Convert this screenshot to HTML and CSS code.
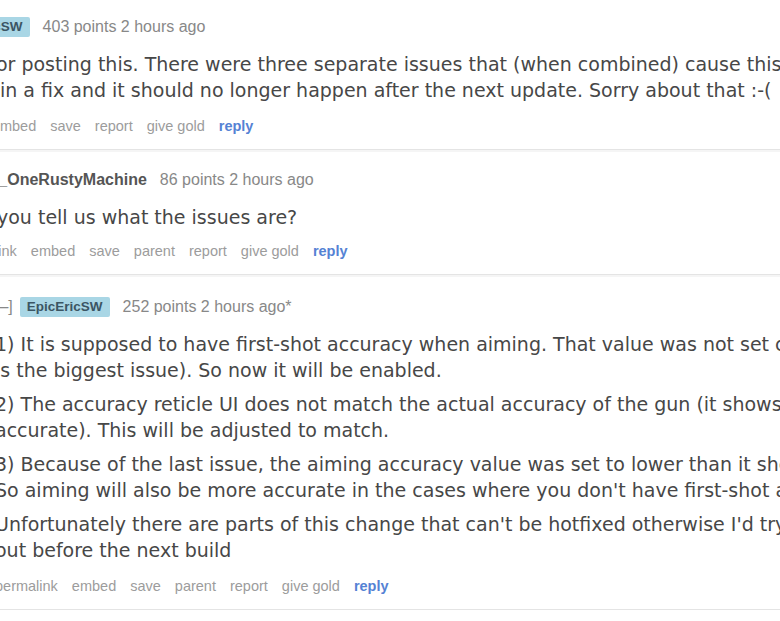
FILE: index.html
```html
<!DOCTYPE html>
<html lang="en">
<head>
    <meta charset="UTF-8">
    <meta name="viewport" content="width=device-width, initial-scale=1.0">
    <title>Comments</title>
    <link rel="stylesheet" href="styles.css">
</head>
<body>
    <div class="thread">
        <div class="comment c1">
            <p class="tagline">
                <a class="expand">[–]</a>
                <a class="author badge">EpicEricSW</a>
                <span class="score">403 points 2 hours ago</span>
            </p>
            <div class="md">
                <p>Thanks for posting this. There were three separate issues that (when combined) cause this bug.<br>So, I put in a fix and it should no longer happen after the next update. Sorry about that :-(</p>
            </div>
            <ul class="buttons">
                <li>permalink</li>
                <li>embed</li>
                <li>save</li>
                <li>report</li>
                <li>give gold</li>
                <li class="reply">reply</li>
            </ul>
        </div>

        <div class="comment c2">
            <p class="tagline">
                <a class="expand">[–]</a>
                <a class="author">Mr_OneRustyMachine</a>
                <span class="score">86 points 2 hours ago</span>
            </p>
            <div class="md">
                <p>Can you tell us what the issues are?</p>
            </div>
            <ul class="buttons">
                <li>permalink</li>
                <li>embed</li>
                <li>save</li>
                <li>parent</li>
                <li>report</li>
                <li>give gold</li>
                <li class="reply">reply</li>
            </ul>
        </div>

        <div class="comment c3">
            <p class="tagline">
                <a class="expand">[–]</a>
                <a class="author badge">EpicEricSW</a>
                <span class="score">252 points 2 hours ago*</span>
            </p>
            <div class="md">
                <p>1) It is supposed to have first-shot accuracy when aiming. That value was not set correctly (this<br>is the biggest issue). So now it will be enabled.</p>
                <p>2) The accuracy reticle UI does not match the actual accuracy of the gun (it shows as less<br>accurate). This will be adjusted to match.</p>
                <p>3) Because of the last issue, the aiming accuracy value was set to lower than it should have been.<br>So aiming will also be more accurate in the cases where you don't have first-shot accuracy.</p>
                <p>Unfortunately there are parts of this change that can't be hotfixed otherwise I'd try to get it<br>out before the next build</p>
            </div>
            <ul class="buttons">
                <li>permalink</li>
                <li>embed</li>
                <li>save</li>
                <li>parent</li>
                <li>report</li>
                <li>give gold</li>
                <li class="reply">reply</li>
            </ul>
        </div>
    </div>
</body>
</html>
```

FILE: styles.css
```css
html, body {
    margin: 0;
    padding: 0;
    background-color: #fff;
    overflow: hidden;
}
.thread {
    margin-top: -3px;
}
.comment {
    padding: 18px 0 13px;
    border-bottom: 1px solid #e4e4e4;
    box-shadow: 0 2px 0 #f5f5f5;
}
.c1 {
    margin-left: -85px;
}
.c2 {
    margin-left: -46px;
}
.c2 .buttons {
    margin-top: 11px;
}
.c3 {
    margin-left: -5px;
    padding-top: 20px;
}
.tagline {
    display: flex;
    align-items: center;
    height: 24px;
    margin: 0;
    font-family: "Liberation Sans", Arial, sans-serif;
    font-size: 16px;
    line-height: 24px;
    color: #888;
    white-space: nowrap;
}
.expand {
    margin-right: 7px;
}
.author {
    margin-right: 13px;
    font-weight: bold;
    color: #555;
}
.badge {
    background-color: #a9d6e5;
    color: #3b5563;
    font-size: 13.5px;
    line-height: 20px;
    padding: 0 7px;
    border-radius: 2px;
}
.md {
    margin-top: 12px;
    font-family: "DejaVu Sans", Verdana, sans-serif;
    font-size: 19px;
    line-height: 26px;
    color: #474747;
    white-space: nowrap;
}
.md p {
    margin: 0;
}
.md p + p {
    margin-top: 8px;
}
.buttons {
    display: flex;
    gap: 14px;
    list-style: none;
    margin: 13px 0 0;
    padding: 0;
    font-family: "Liberation Sans", Arial, sans-serif;
    font-size: 14.5px;
    line-height: 20px;
    color: #9c9c9c;
    white-space: nowrap;
}
.buttons .reply {
    color: #5582d4;
    font-weight: bold;
}
```
